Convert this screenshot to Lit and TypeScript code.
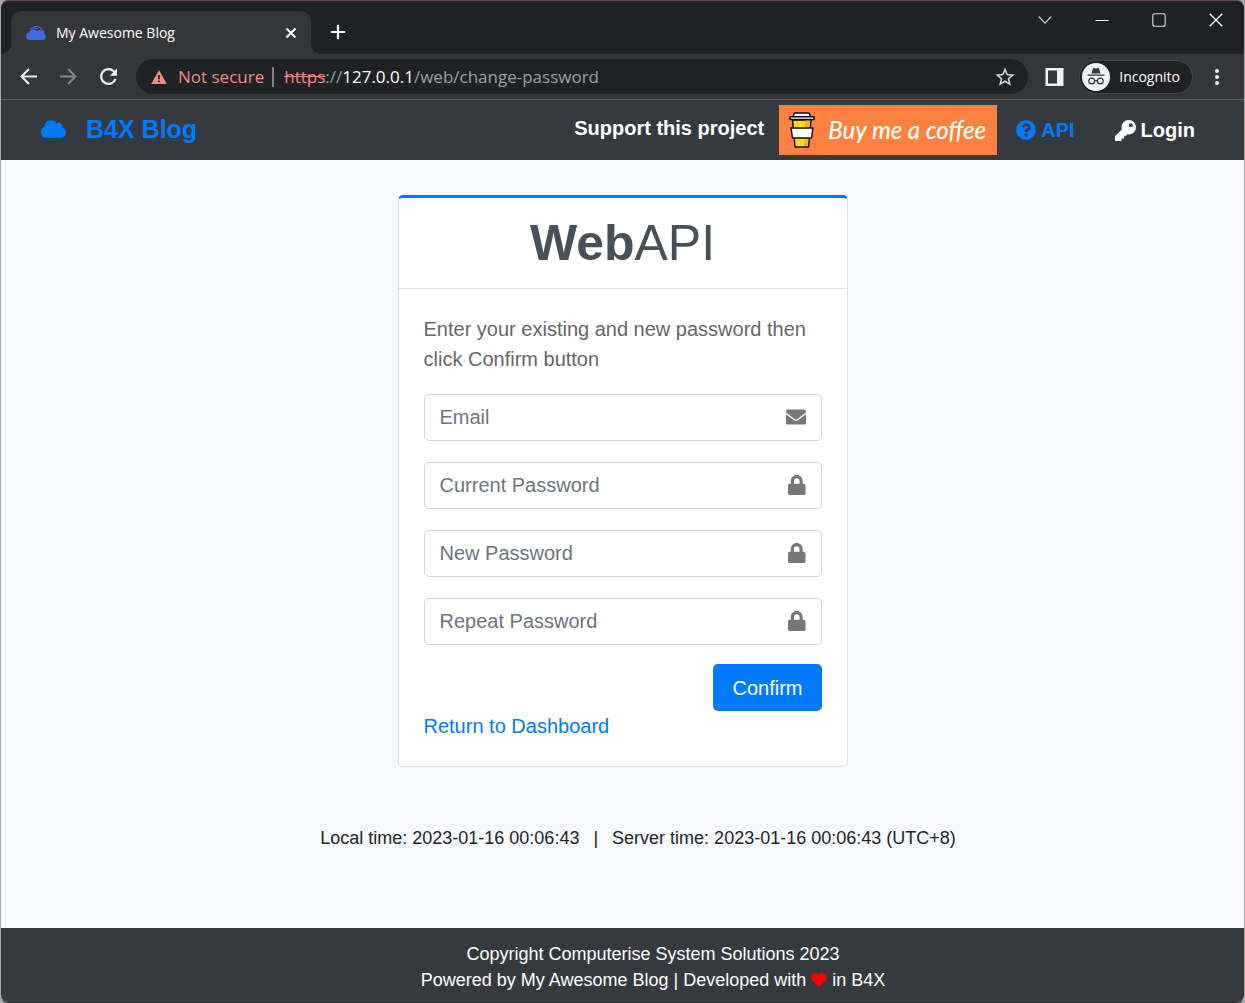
import { LitElement, html, css } from "lit";
import { customElement, property } from "lit/decorators.js";

const glyphs: Record<string, { box: string; d: string }> = {
  cloud: {
    box: "0 0 640 512",
    d: "M537.6 226.6c4.1-10.7 6.4-22.4 6.4-34.6 0-53-43-96-96-96-19.7 0-38.1 6-53.3 16.2C367 64.2 315.3 32 256 32c-88.4 0-160 71.6-160 160 0 2.7.1 5.4.2 8.1C40.2 219.8 0 273.2 0 336c0 79.5 64.5 144 144 144h368c70.7 0 128-57.3 128-128 0-61.9-44-113.6-102.4-125.4z",
  },
  question: {
    box: "0 0 512 512",
    d: "M504 256c0 136.997-111.043 248-248 248S8 392.997 8 256C8 119.083 119.043 8 256 8s248 111.083 248 248zM262.655 90c-54.497 0-89.255 22.957-116.549 63.758-3.536 5.286-2.353 12.415 2.715 16.258l34.699 26.31c5.205 3.947 12.621 3.008 16.665-2.122 17.864-22.658 30.113-35.797 57.303-35.797 20.429 0 45.698 13.148 45.698 32.958 0 14.976-12.363 22.667-32.534 33.976C247.128 238.528 216 254.941 216 296v4c0 6.627 5.373 12 12 12h56c6.627 0 12-5.373 12-12v-1.333c0-28.462 83.186-29.647 83.186-106.667 0-58.002-60.165-102-116.531-102zM256 338c-25.365 0-46 20.635-46 46 0 25.364 20.635 46 46 46s46-20.636 46-46c0-25.365-20.635-46-46-46z",
  },
  key: {
    box: "0 0 512 512",
    d: "M512 176.001C512 273.203 433.202 352 336 352c-11.22 0-22.19-1.062-32.827-3.069l-24.012 27.014A23.999 23.999 0 0 1 261.223 384H224v40c0 13.255-10.745 24-24 24h-40v40c0 13.255-10.745 24-24 24H24c-13.255 0-24-10.745-24-24v-78.059c0-6.365 2.529-12.47 7.029-16.971l161.802-161.802C163.108 213.814 160 195.271 160 176 160 78.798 238.797.001 335.999 0 433.488-.001 512 78.511 512 176.001zM336 128c0 26.51 21.49 48 48 48s48-21.49 48-48-21.49-48-48-48-48 21.49-48 48z",
  },
  envelope: {
    box: "0 0 512 512",
    d: "M502.3 190.8c3.9-3.1 9.7-.2 9.7 4.7V400c0 26.5-21.5 48-48 48H48c-26.5 0-48-21.5-48-48V195.6c0-5 5.7-7.8 9.7-4.7 22.4 17.4 52.1 39.5 154.1 113.6 21.1 15.4 56.7 47.8 92.2 47.6 35.7.3 72-32.8 92.3-47.6 102-74.1 131.6-96.3 154-113.7zM256 320c23.2.4 56.6-29.2 73.4-41.4 132.7-96.3 142.8-104.7 173.4-128.7 5.8-4.5 9.2-11.5 9.2-18.9v-19c0-26.5-21.5-48-48-48H48c-26.5 0-48 21.5-48 48v19c0 7.4 3.4 14.3 9.2 18.9 30.6 23.9 40.7 32.4 173.4 128.7 16.8 12.2 50.2 41.8 73.4 41.4z",
  },
  lock: {
    box: "0 0 448 512",
    d: "M400 224h-24v-72C376 68.2 307.8 0 224 0S72 68.2 72 152v72H48c-26.5 0-48 21.5-48 48v192c0 26.5 21.5 48 48 48h352c26.5 0 48-21.5 48-48V272c0-26.5-21.5-48-48-48zm-104 0H152v-72c0-39.7 32.3-72 72-72s72 32.3 72 72v72z",
  },
  heart: {
    box: "0 0 512 512",
    d: "M462.3 62.6C407.5 15.9 326 24.3 275.7 76.2L256 96.5l-19.7-20.3C186.1 24.3 104.5 15.9 49.7 62.6c-62.8 53.6-66.1 149.8-9.9 207.9l193.5 199.8c12.5 12.9 32.8 12.9 45.3 0l193.5-199.8c56.3-58.1 53-154.3-9.8-207.9z",
  },
};

const glyph = (name: string, cls: string) => html`
  <svg class=${cls} viewBox=${glyphs[name].box} aria-hidden="true">
    <path fill="currentColor" d=${glyphs[name].d}></path>
  </svg>
`;

const reset = css`
  *,
  *::before,
  *::after {
    box-sizing: border-box;
  }
  svg {
    display: block;
    flex: none;
  }
  a {
    color: inherit;
    text-decoration: none;
  }
  button {
    margin: 0;
    padding: 0;
    border: 0;
    background: none;
    color: inherit;
    font: inherit;
    cursor: pointer;
  }
`;

@customElement("browser-chrome")
export class BrowserChrome extends LitElement {
  static styles = [
    reset,
    css`
      :host {
        display: block;
        font-family: "Open Sans", "Noto Sans", sans-serif;
        color: #fff;
        background: #35363a;
        border-bottom: 1px solid #626366;
      }
      .strip {
        display: flex;
        justify-content: space-between;
        height: 53px;
        background: #202124;
      }
      .tabs {
        display: flex;
        align-items: flex-end;
      }
      .flare {
        width: 10px;
        height: 10px;
      }
      .left {
        background: radial-gradient(circle at 0 0, #202124 10px, #35363a 10px);
      }
      .right {
        background: radial-gradient(circle at 100% 0, #202124 10px, #35363a 10px);
      }
      .tab {
        display: flex;
        align-items: center;
        gap: 9px;
        width: 300px;
        height: 43px;
        padding: 0 14px;
        border-radius: 10px 10px 0 0;
        background: #35363a;
        font-size: 14px;
      }
      .label {
        flex: 1;
        white-space: nowrap;
      }
      .add {
        align-self: center;
        padding: 8px;
        margin: 9px 0 0 1px;
      }
      .controls {
        display: flex;
      }
      .control {
        display: grid;
        place-items: center;
        width: 57px;
        height: 37px;
      }
      .bar {
        display: flex;
        align-items: center;
        height: 45px;
        padding: 0 23px 0 17px;
      }
      .nav {
        display: flex;
        gap: 20px;
        padding-right: 17px;
      }
      .omnibox {
        display: flex;
        align-items: center;
        flex: 1;
        height: 35px;
        padding: 0 13px 0 15px;
        border-radius: 18px;
        background: #202124;
        font-size: 17px;
      }
      .insecure {
        color: #f28b82;
        padding: 0 8px 0 11px;
      }
      .divider {
        width: 2px;
        height: 20px;
        margin-right: 10px;
        background: #7f8184;
      }
      .url {
        flex: 1;
        color: #9aa0a6;
      }
      .scheme {
        color: #f28b82;
        text-decoration: line-through;
      }
      .host {
        color: #fff;
      }
      .panel {
        margin: 0 15px 0 17px;
      }
      .profile {
        display: flex;
        align-items: center;
        gap: 9px;
        height: 34px;
        padding: 0 12px 0 2px;
        margin-right: 20px;
        border: 1px solid #46474b;
        border-radius: 17px;
        background: #202124;
        font-size: 14px;
      }
    `,
  ];

  render() {
    return html`
      <div class="strip">
        <div class="tabs">
          <span class="flare left"></span>
          <div class="tab">
            <svg width="22" height="22" viewBox="0 0 22 22" aria-hidden="true">
              <path fill="#4169e1" d="M5 18C2.400 18 1 16.500 1 14.300c0-1.800 1.200-3.200 3-3.500C4.300 8.600 6 7.300 8.200 7.300c1.500 0 2.700.6 3.500 1.700 2.900-.9 5.500.4 6 2.500 2 0 3.300 1.300 3.300 3.100 0 2-1.500 3.400-3.600 3.400z"></path>
              <path fill="none" stroke="#4169e1" stroke-width="1.200" d="M5 7.200C6.800 5.400 10.500 5.200 12.500 7.400M8.500 5.500C11.500 3.300 16 4.800 16.800 8c1.200.3 2 1 2.300 2.200"></path>
              <path fill="#4169e1" d="M13 8.200c2.500-.4 4.800.7 5.600 2.600l1 2.200-6-1z"></path>
            </svg>
            <span class="label">My Awesome Blog</span>
            <button aria-label="Close tab">
              <svg width="12" height="12" viewBox="0 0 12 12"><path d="M1.500 1.500l9 9m0-9l-9 9" stroke="#fff" stroke-width="2"></path></svg>
            </button>
          </div>
          <span class="flare right"></span>
          <button class="add" aria-label="New tab">
            <svg width="16" height="16" viewBox="0 0 16 16"><path d="M8 .8v14.400M.8 8h14.400" stroke="#fff" stroke-width="2.200"></path></svg>
          </button>
        </div>
        <div class="controls">
          <button class="control" aria-label="Search tabs">
            <svg width="14" height="14" viewBox="0 0 14 14"><path d="M.8 3.500L7 10.200l6.200-6.700" fill="none" stroke="#c8c9cb" stroke-width="1.200"></path></svg>
          </button>
          <button class="control" aria-label="Minimize">
            <svg width="14" height="14" viewBox="0 0 14 14"><path d="M.5 7.500h13" stroke="#fff"></path></svg>
          </button>
          <button class="control" aria-label="Maximize">
            <svg width="14" height="14" viewBox="0 0 14 14"><rect x=".8" y=".8" width="12.400" height="12.400" rx="2" fill="none" stroke="#e0e0e0" stroke-width="1.100"></rect></svg>
          </button>
          <button class="control" aria-label="Close window">
            <svg width="14" height="14" viewBox="0 0 14 14"><path d="M.7.7l12.600 12.600m0-12.600L.7 13.300" stroke="#fff" stroke-width="1.300"></path></svg>
          </button>
        </div>
      </div>
      <div class="bar">
        <div class="nav">
          <button aria-label="Back">
            <svg width="20" height="20" viewBox="0 0 20 20"><path d="M19 9.500H4M11 2L3.500 9.500 11 17" fill="none" stroke="#f1f3f4" stroke-width="2"></path></svg>
          </button>
          <button aria-label="Forward">
            <svg width="20" height="20" viewBox="0 0 20 20"><path d="M2 9.500h15M10 2l7.500 7.500L10 17" fill="none" stroke="#86878a" stroke-width="2"></path></svg>
          </button>
          <button aria-label="Reload">
            <svg width="21" height="20" viewBox="0 0 21 20"><path d="M17.500 12A7.400 7.400 0 1 1 15.700 4.200L17.300 5.800" fill="none" stroke="#f1f3f4" stroke-width="2.200"></path><path fill="#f1f3f4" d="M19 1.500v7.200h-7.200z"></path></svg>
          </button>
        </div>
        <div class="omnibox">
          <svg width="16" height="16" viewBox="0 0 16 16" aria-hidden="true">
            <path fill="#f28b82" d="M8 1l7.800 14H.2z"></path>
            <path stroke="#202124" stroke-width="1.700" d="M8 6v4.200M8 11.500v1.700"></path>
          </svg>
          <span class="insecure">Not secure</span>
          <span class="divider"></span>
          <span class="url"><span class="scheme">https</span>://<span class="host">127.0.0.1</span>/web/change-password</span>
          <button aria-label="Bookmark this page">
            <svg width="20" height="20" viewBox="0 0 20 20"><path d="M10 2.500l2.200 5.100 5.500.5-4.200 3.600 1.300 5.400-4.800-2.900-4.800 2.900 1.300-5.400L2.300 8.100l5.500-.5z" fill="none" stroke="#d2d4d7" stroke-width="1.600"></path></svg>
          </button>
        </div>
        <button class="panel" aria-label="Side panel">
          <svg width="19" height="18" viewBox="0 0 19 18"><path fill="#f1f3f4" fill-rule="evenodd" d="M.5 0h18v18H.5zM3 2.500v13h9v-13z"></path></svg>
        </button>
        <button class="profile">
          <svg width="28" height="28" viewBox="0 0 28 28" aria-hidden="true">
            <circle cx="14" cy="14" r="14" fill="#f1f3f4"></circle>
            <path fill="#35363a" d="M9.500 10.500l1.400-4.800c.2-.6.700-.8 1.300-.6l1.800.6 1.800-.6c.6-.2 1.100 0 1.300.6l1.400 4.800zM5.500 11.500h17v1.300h-17z"></path>
            <g fill="none" stroke="#35363a" stroke-width="1.300"><circle cx="9.700" cy="18" r="2.900"></circle><circle cx="18.300" cy="18" r="2.900"></circle><path d="M12.700 18q1.300-.9 2.600 0"></path></g>
          </svg>
          <span>Incognito</span>
        </button>
        <button aria-label="Browser menu">
          <svg width="8" height="18" viewBox="0 0 8 18"><g fill="#f1f3f4"><circle cx="4" cy="3" r="2"></circle><circle cx="4" cy="9" r="2"></circle><circle cx="4" cy="15" r="2"></circle></g></svg>
        </button>
      </div>
    `;
  }
}

@customElement("site-navbar")
export class SiteNavbar extends LitElement {
  static styles = [
    reset,
    css`
      :host {
        display: block;
      }
      .navbar {
        display: flex;
        align-items: center;
        justify-content: space-between;
        height: 60px;
        padding: 0 49px 0 39px;
        background: #343a40;
        color: #fff;
        font-size: 20px;
        font-weight: 700;
      }
      .brand {
        display: flex;
        align-items: center;
        gap: 19px;
        padding-bottom: 2px;
        color: #007bff;
        font-size: 25px;
      }
      .cloud {
        width: 27px;
        height: 20px;
      }
      .links {
        display: flex;
        align-items: center;
      }
      .support {
        padding: 0 15px 4px 0;
      }
      .coffee {
        display: flex;
        align-items: center;
        gap: 13px;
        width: 218px;
        height: 50px;
        padding-left: 10px;
        margin-right: 19px;
        background: #ff813f;
        font-family: Lato, sans-serif;
        font-size: 24px;
        font-style: italic;
        font-weight: 500;
        white-space: nowrap;
      }
      .link {
        display: flex;
        align-items: center;
        gap: 5px;
      }
      .api {
        color: #007bff;
        margin-right: 40px;
      }
      .icon {
        width: 21px;
        height: 21px;
      }
      .api .icon {
        width: 20px;
        height: 20px;
      }
    `,
  ];

  render() {
    return html`
      <nav class="navbar">
        <a class="brand" href="#home">${glyph("cloud", "cloud")}<span>B4X Blog</span></a>
        <div class="links">
          <span class="support">Support this project</span>
          <a class="coffee" href="#coffee">
            <svg width="26" height="36" viewBox="0 0 26 36" aria-hidden="true">
              <g stroke="#0d0c22" stroke-width="1.500" stroke-linejoin="round">
                <path fill="#ffdd00" d="M3.500 8h18.500l-2.500 27H6z"></path>
                <path fill="#fff" d="M2 16h22l-1.500 10H3.500z"></path>
                <path fill="#fff" d="M5.500 1h14.500l2 4H4z"></path>
                <path fill="#fff" d="M1 4.800h24v2.700H1z"></path>
              </g>
              <path fill="#f2b705" d="M16.500 8.500h4.600l-.5 6.600h-4.600zM15.500 27h3.800l-.6 7h-3.800z"></path>
            </svg>
            <span>Buy me a coffee</span>
          </a>
          <a class="link api" href="#api">${glyph("question", "icon")}<span>API</span></a>
          <a class="link" href="#login">${glyph("key", "icon")}<span>Login</span></a>
        </div>
      </nav>
    `;
  }
}

@customElement("form-field")
export class FormField extends LitElement {
  @property() label = "";
  @property() type = "text";
  @property() icon = "lock";

  static styles = [
    reset,
    css`
      :host {
        display: block;
      }
      .field {
        display: flex;
        align-items: center;
        height: 47px;
        padding: 0 15px;
        border: 1px solid #ced4da;
        border-radius: 5px;
        background: #fff;
        color: #777;
      }
      .input {
        flex: 1;
        min-width: 0;
        height: 43px;
        padding: 0;
        border: 0;
        outline: 0;
        background: none;
        color: #495057;
        font: inherit;
      }
      .input::placeholder {
        color: #6c757d;
        opacity: 1;
      }
      .icon {
        height: 20px;
        margin-bottom: 2px;
      }
    `,
  ];

  render() {
    return html`
      <label class="field">
        <input class="input" type=${this.type} placeholder=${this.label} aria-label=${this.label} />
        ${glyph(this.icon, "icon")}
      </label>
    `;
  }
}

@customElement("password-card")
export class PasswordCard extends LitElement {
  static styles = [
    reset,
    css`
      :host {
        display: block;
        width: 450px;
        max-width: 100%;
      }
      .card {
        border: 1px solid #dfdfdf;
        border-top: 3px solid #007bff;
        border-radius: 5px;
        background: #fff;
      }
      .header {
        padding: 15px 25px;
        border-bottom: 1px solid #dfdfdf;
        text-align: center;
      }
      .title {
        margin: 0;
        color: #495057;
        font-size: 50px;
        line-height: 60px;
        font-weight: 400;
      }
      .body {
        padding: 25px;
        color: #666;
      }
      .message {
        margin: 0 0 20px;
      }
      .fields {
        display: grid;
        gap: 21px;
      }
      .actions {
        display: flex;
        justify-content: flex-end;
        margin-top: 19px;
      }
      .confirm {
        height: 47px;
        padding: 0 19px;
        border-radius: 5px;
        background: #007bff;
        color: #fff;
      }
      .back {
        color: #007bff;
      }
    `,
  ];

  render() {
    return html`
      <section class="card">
        <div class="header"><h1 class="title"><b>Web</b>API</h1></div>
        <div class="body">
          <p class="message">Enter your existing and new password then click Confirm button</p>
          <form @submit=${(e: Event) => e.preventDefault()}>
            <div class="fields">
              <form-field label="Email" type="email" icon="envelope"></form-field>
              <form-field label="Current Password" type="password"></form-field>
              <form-field label="New Password" type="password"></form-field>
              <form-field label="Repeat Password" type="password"></form-field>
            </div>
            <div class="actions"><button class="confirm" type="submit">Confirm</button></div>
          </form>
          <a class="back" href="#dashboard">Return to Dashboard</a>
        </div>
      </section>
    `;
  }
}

@customElement("app-root")
export class AppRoot extends LitElement {
  static styles = [
    reset,
    css`
      :host {
        display: block;
        min-height: 100vh;
        background: #a9a9ab;
        font-family: "Liberation Sans", Arial, sans-serif;
        font-size: 20px;
        line-height: 30px;
      }
      .window {
        display: flex;
        flex-direction: column;
        min-height: 100vh;
        border: 1px solid #a9a9ab;
        border-top-color: #6b4470;
        border-bottom-color: #2a2b2e;
        border-radius: 8px;
        overflow: hidden;
        background: #f8f9fc;
      }
      .content {
        flex: 1;
        display: flex;
        flex-direction: column;
        align-items: center;
        padding: 35px 0 60px;
      }
      .times {
        display: flex;
        gap: 14px;
        margin: 56px 0 0;
        padding-left: 31px;
        color: #212529;
        font-size: 18px;
      }
      .footer {
        height: 74px;
        padding: 13px 0 0 61px;
        background: #343a40;
        color: #fff;
        font-size: 18px;
        line-height: 26px;
        text-align: center;
      }
      .line {
        display: flex;
        justify-content: center;
        align-items: center;
        gap: 5px;
        margin: 0;
      }
      .heart {
        width: 16px;
        height: 16px;
        color: #f00;
      }
    `,
  ];

  render() {
    return html`
      <div class="window">
        <browser-chrome></browser-chrome>
        <site-navbar></site-navbar>
        <main class="content">
          <password-card></password-card>
          <p class="times">
            <span>Local time: 2023-01-16 00:06:43</span><span>|</span><span>Server time: 2023-01-16 00:06:43 (UTC+8)</span>
          </p>
        </main>
        <footer class="footer">
          <p class="line">Copyright Computerise System Solutions 2023</p>
          <p class="line"><span>Powered by My Awesome Blog | Developed with</span>${glyph("heart", "heart")}<span>in B4X</span></p>
        </footer>
      </div>
    `;
  }
}
